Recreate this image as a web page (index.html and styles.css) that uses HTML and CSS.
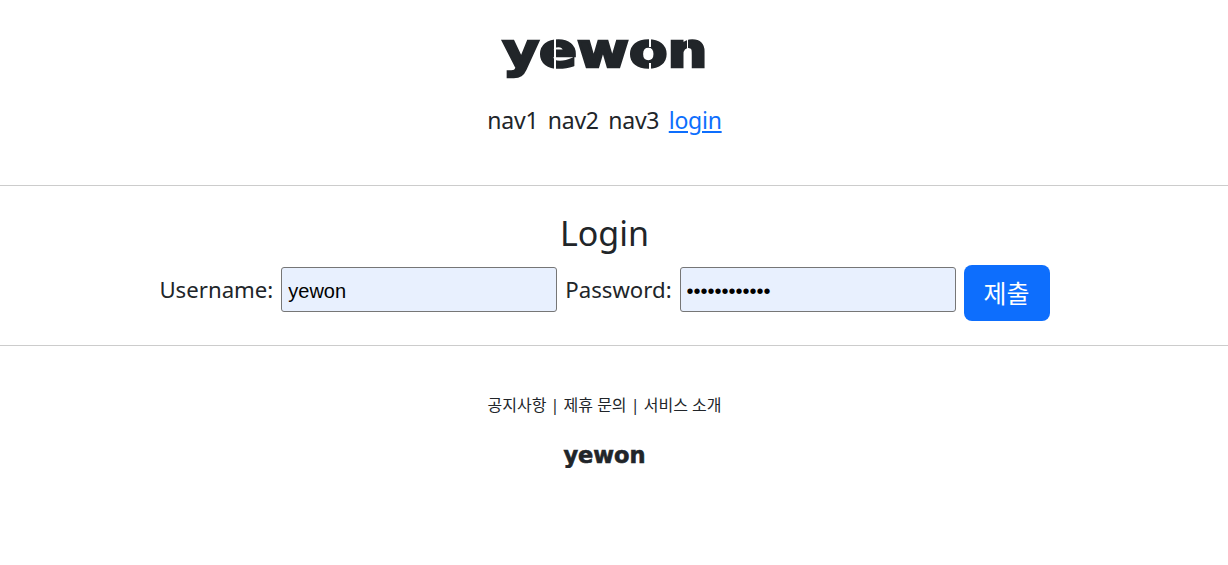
FILE: index.html
```html
<!DOCTYPE html>
<html lang="ko">
<head>
  <meta charset="UTF-8">
  <meta name="viewport" content="width=device-width, initial-scale=1.0">
  <title>yewon</title>
  <link rel="stylesheet" href="styles.css">
</head>
<body>

<header class="site-header">
  <div class="logo">
    <div class="logo-mark"><span class="logo-text">yewon</span></div>
  </div>
  <nav class="site-nav">
    <span>nav1</span>
    <span>nav2</span>
    <span>nav3</span>
    <a href="#">login</a>
  </nav>
</header>

<main class="login-box">
  <h2>Login</h2>
  <form class="login-form">
    <label for="username">Username:</label>
    <input type="text" id="username" value="yewon">
    <label for="password">Password:</label>
    <input type="password" id="password" value="yewonpass123">
    <button type="submit">제출</button>
  </form>
</main>

<footer class="site-footer">
  <p class="footer-links">공지사항 | 제휴 문의 | 서비스 소개</p>
  <div class="logo-small">yewon</div>
</footer>

</body>
</html>
```
FILE: styles.css
```css
* {
  margin: 0;
  padding: 0;
  box-sizing: border-box;
}

body {
  font-family: "Noto Sans", "Noto Sans CJK KR", sans-serif;
  color: #212529;
  background-color: #fff;
}

/* Header */
.site-header {
  height: 186px;
  padding: 24px 19px 0 0;
  text-align: center;
  border-bottom: 1px solid #ccc;
}

.logo {
  display: flex;
  justify-content: center;
  height: 64px;
}

.logo-mark {
  position: relative;
  width: 204px;
  height: 58px;
  font-family: "DejaVu Sans", sans-serif;
  font-weight: bold;
  font-size: 48px;
  line-height: 52px;
}

.logo-text {
  display: block;
  white-space: nowrap;
  transform: scaleX(1.17);
  -webkit-text-stroke: 2.5px #212529;
}

/* stencil cuts over the letters */
.logo-mark::after {
  content: "";
  position: absolute;
  inset: 0;
  background:
    linear-gradient(#fff, #fff) 51px 14px / 2px 36px no-repeat,
    linear-gradient(#fff, #fff) 146px 14px / 2px 9px no-repeat,
    linear-gradient(#fff, #fff) 146px 39px / 2px 10px no-repeat,
    linear-gradient(#fff, #fff) 184px 14px / 1px 36px no-repeat;
}

.site-nav {
  display: flex;
  justify-content: center;
  gap: 9.5px;
  margin-top: 17px;
  font-size: 23px;
  line-height: 30px;
  letter-spacing: -0.25px;
}

.site-nav a {
  color: #0d6efd;
}

/* Login */
.login-box {
  height: 160px;
  padding: 24px 19px 0 0;
  text-align: center;
  border-bottom: 1px solid #ccc;
}

.login-box h2 {
  font-size: 34px;
  font-weight: 400;
  line-height: 46px;
}

.login-form {
  display: flex;
  justify-content: center;
  align-items: flex-start;
  gap: 8px;
  margin-top: 9px;
  font-size: 22.2px;
}

.login-form label {
  margin-top: 10px;
  line-height: 30px;
}

.login-form input {
  width: 276px;
  height: 45px;
  margin-top: 2px;
  padding: 5px 6px 1px;
  font-family: "Liberation Sans", sans-serif;
  font-size: 20px;
  color: #000;
  background-color: #e8f0fe;
  border: 1px solid #767676;
  border-radius: 3px;
}

.login-form button {
  width: 86px;
  height: 56px;
  padding-bottom: 3px;
  font-family: "Noto Sans CJK KR", sans-serif;
  font-size: 25px;
  color: #fff;
  background-color: #0d6efd;
  border: none;
  border-radius: 8px;
}

/* Footer */
.site-footer {
  padding: 49px 19px 0 0;
  text-align: center;
}

.footer-links {
  font-size: 16px;
  line-height: 21px;
}

.logo-small {
  margin-top: 26px;
  font-family: "DejaVu Sans", sans-serif;
  font-weight: bold;
  font-size: 22.5px;
  line-height: 26px;
  -webkit-text-stroke: 0.6px #212529;
}
```
